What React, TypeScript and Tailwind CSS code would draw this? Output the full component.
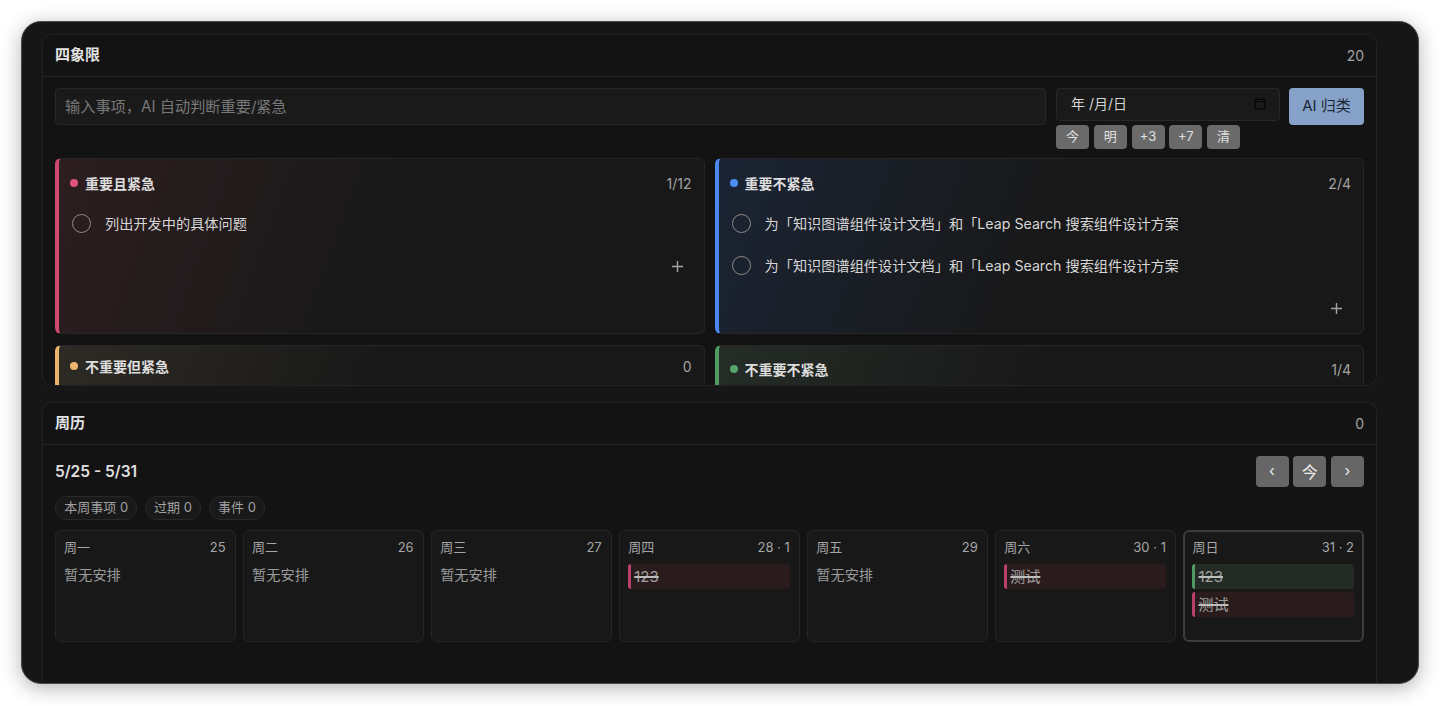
const longTask = '为「知识图谱组件设计文档」和「Leap Search 搜索组件设计方案」补充交互细节与验收标准'

function PanelHeader({ title, count }: { title: string; count: string }) {
  return (
    <div className="flex h-[42px] shrink-0 items-center justify-between border-b border-[#222222] px-[12px]">
      <span className="text-[15px] font-semibold text-[#e4e4e4]">{title}</span>
      <span className="text-[14px] text-[#a3a3a3]">{count}</span>
    </div>
  )
}

function Task({ text }: { text: string }) {
  return (
    <div className="flex h-[42px] items-center pl-[2px]">
      <span className="h-[19px] w-[19px] shrink-0 rounded-full border-[1.5px] border-[#8f8a86]" />
      <span className="ml-[14px] w-[413px] overflow-hidden whitespace-nowrap pt-[1px] text-[14.2px] text-[#d6d6d6]">{text}</span>
    </div>
  )
}

function Plus() {
  return (
    <div className="flex h-[44px] items-center justify-end pr-[9px]">
      <svg width="11" height="11" viewBox="0 0 11 11" stroke="#a3a3a3" strokeWidth="1.4" fill="none">
        <path d="M5.5 0v11M0 5.5h11" />
      </svg>
    </div>
  )
}

function QuadrantHead({ dot, title, count }: { dot: string; title: string; count: string }) {
  return (
    <div className="flex h-[20px] items-center justify-between">
      <div className="flex items-center gap-[7px]">
        <span className={`h-[8px] w-[8px] rounded-full ${dot}`} />
        <span className="text-[14px] font-semibold text-[#dedede]">{title}</span>
      </div>
      <span className="text-[14px] text-[#a3a3a3]">{count}</span>
    </div>
  )
}

function Chip({ label }: { label: string }) {
  return (
    <span className="flex h-[24px] w-[33px] items-center justify-center rounded-[4px] bg-[#6a6a6a] text-[13px] text-[#e0e0e0]">
      {label}
    </span>
  )
}

function NavButton({ label, size }: { label: string; size: string }) {
  return (
    <span className={`flex h-[31px] w-[33px] items-center justify-center rounded-[4px] bg-[#666666] text-[#ececec] ${size}`}>
      {label}
    </span>
  )
}

function Pill({ label }: { label: string }) {
  return (
    <span className="flex h-[24px] items-center rounded-full border border-[#292929] bg-[#191919] px-[8.25px] text-[13px] text-[#a0a0a0]">
      {label}
    </span>
  )
}

function EventBar({ text, bar, bg }: { text: string; bar: string; bg: string }) {
  return (
    <div className={`flex h-[25px] items-center rounded-[3px] border-l-[3px] pl-[3px] pt-[1px] text-[15px] ${bar} ${bg}`}>
      <span className="text-[#a0a0a0] line-through decoration-[#bdbdbd] decoration-[1.5px]">{text}</span>
    </div>
  )
}

function Day({ name, date, today, children }: { name: string; date: string; today?: boolean; children?: React.ReactNode }) {
  return (
    <div className={`h-[112px] rounded-[6px] bg-[#181818] ${today ? 'border-2 border-[#3c3c3c] pl-[7px] pr-[8px] pt-[7px]' : 'border border-[#262626] pl-[8px] pr-[9px] pt-[8px]'}`}>
      <div className="flex h-[18px] items-center justify-between text-[13px] text-[#a6a6a6]">
        <span>{name}</span>
        <span>{date}</span>
      </div>
      <div className="mt-[7px] flex flex-col gap-[3px]">
        {children ?? <span className="mt-[1px] text-[14.2px] leading-[20px] text-[#9c9c9c]">暂无安排</span>}
      </div>
    </div>
  )
}

const red = { bar: 'border-[#b8406a]', bg: 'bg-[#2a1c1c]' }
const green = { bar: 'border-[#4f9a63]', bg: 'bg-[#232b24]' }

export default function App() {
  return (
    <div className="h-[706px] w-[1440px] overflow-hidden bg-white p-[21px] font-['Inter','Noto_Sans_CJK_SC',sans-serif]">
      <div className="flex h-[663px] w-[1398px] flex-col overflow-hidden rounded-[20px] border border-[#4a4a4a] bg-[#161616] pl-[20px] pr-[41px] pt-[12px] shadow-[0_4px_20px_rgba(0,0,0,0.3)]">
        <section className="h-[352px] shrink-0 overflow-hidden rounded-[10px] border border-[#222222] bg-[#131313]">
          <PanelHeader title="四象限" count="20" />
          <div className="px-[12px] pt-[11px]">
            <div className="flex gap-[10px]">
              <div className="flex h-[37px] w-[991px] items-center rounded-[4px] border border-[#272727] bg-[#1a1a1a] px-[9px] pt-[1px] text-[15.2px] text-[#787878]">
                输入事项，AI 自动判断重要/紧急
              </div>
              <div className="w-[224px]">
                <div className="flex h-[33px] items-center justify-between rounded-[4px] border border-[#272727] bg-[#1a1a1a] pb-[2px] pl-[14px] pr-[13px] text-[14px] text-[#d4d4d4]">
                  <span>年 /月/日</span>
                  <svg width="12" height="13" viewBox="0 0 12 13" fill="none" stroke="#050505" strokeWidth="1.2">
                    <rect x="1" y="2.5" width="10" height="9.5" rx="1" />
                    <path d="M1 4.5h10M3.5 0.5v2M8.5 0.5v2" />
                  </svg>
                </div>
                <div className="mt-[4px] flex gap-[4.75px]">
                  <Chip label="今" />
                  <Chip label="明" />
                  <Chip label="+3" />
                  <Chip label="+7" />
                  <Chip label="清" />
                </div>
              </div>
              <div className="ml-[-1px] flex h-[37px] w-[75px] items-center justify-center rounded-[4px] bg-[#87a2c8] text-[15px] text-[#1d2736]">
                AI 归类
              </div>
            </div>
            <div className="mt-[9px] grid grid-cols-2 gap-x-[10px] gap-y-[11px]">
              <div className="h-[176px] rounded-[6px] border border-l-4 border-[#262626] border-l-[#d04a70] bg-[linear-gradient(110deg,#2d1e20_0%,#181818_50%)] pl-[11px] pr-[12px] pt-[14px]">
                <QuadrantHead dot="bg-[#e0527a]" title="重要且紧急" count="1/12" />
                <div className="mt-[9px]">
                  <Task text="列出开发中的具体问题" />
                  <Plus />
                </div>
              </div>
              <div className="h-[176px] rounded-[6px] border border-l-4 border-[#262626] border-l-[#4a88f0] bg-[linear-gradient(110deg,#1b2434_0%,#181818_50%)] pl-[11px] pr-[12px] pt-[14px]">
                <QuadrantHead dot="bg-[#4d8ff5]" title="重要不紧急" count="2/4" />
                <div className="mt-[9px]">
                  <Task text={longTask} />
                  <Task text={longTask} />
                  <Plus />
                </div>
              </div>
              <div className="h-[60px] rounded-[6px] border border-l-4 border-[#262626] border-l-[#eab56b] bg-[linear-gradient(110deg,#2e2b25_0%,#181818_50%)] pl-[11px] pr-[12px] pt-[10px]">
                <QuadrantHead dot="bg-[#efb76e]" title="不重要但紧急" count="0" />
              </div>
              <div className="h-[60px] rounded-[6px] border border-l-4 border-[#262626] border-l-[#4f9a63] bg-[linear-gradient(110deg,#252d27_0%,#181818_50%)] pl-[11px] pr-[12px] pt-[13px]">
                <QuadrantHead dot="bg-[#55a56c]" title="不重要不紧急" count="1/4" />
              </div>
            </div>
          </div>
        </section>

        <section className="mt-[16px] flex-1 rounded-t-[10px] border border-b-0 border-[#222222] bg-[#131313]">
          <PanelHeader title="周历" count="0" />
          <div className="px-[12px] pt-[11px]">
            <div className="flex h-[31px] items-center justify-between">
              <span className="text-[15.5px] font-semibold text-[#e0e0e0]">5/25 - 5/31</span>
              <div className="flex gap-[4.75px]">
                <NavButton label="‹" size="text-[15px]" />
                <NavButton label="今" size="text-[16px]" />
                <NavButton label="›" size="text-[15px]" />
              </div>
            </div>
            <div className="mt-[9px] flex gap-[7.5px]">
              <Pill label="本周事项 0" />
              <Pill label="过期 0" />
              <Pill label="事件 0" />
            </div>
            <div className="mt-[10px] grid grid-cols-7 gap-[7.5px]">
              <Day name="周一" date="25" />
              <Day name="周二" date="26" />
              <Day name="周三" date="27" />
              <Day name="周四" date="28 · 1">
                <EventBar text="123" {...red} />
              </Day>
              <Day name="周五" date="29" />
              <Day name="周六" date="30 · 1">
                <EventBar text="测试" {...red} />
              </Day>
              <Day name="周日" date="31 · 2" today>
                <EventBar text="123" {...green} />
                <EventBar text="测试" {...red} />
              </Day>
            </div>
          </div>
        </section>
      </div>
    </div>
  )
}
